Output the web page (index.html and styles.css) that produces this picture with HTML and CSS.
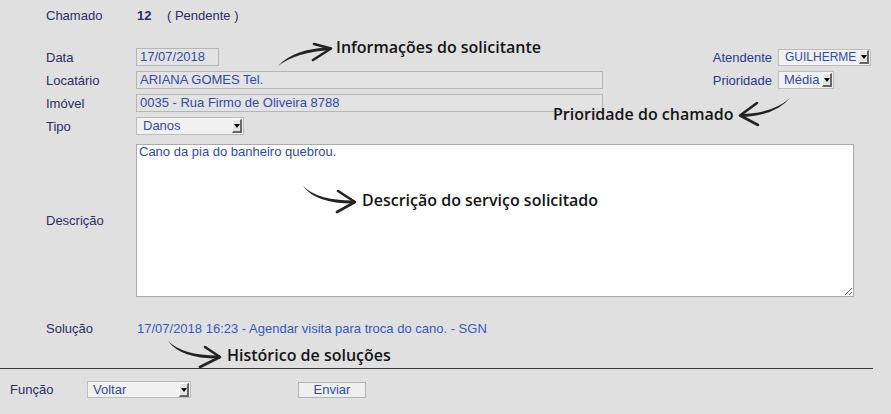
FILE: index.html
```html
<!DOCTYPE html>
<html lang="pt-BR">
<head>
<meta charset="utf-8">
<title>Chamado 12</title>
<link rel="stylesheet" href="styles.css">
</head>
<body>
<div class="page">
  <div class="form">
    <div class="head">
      <span class="lbl">Chamado</span>
      <b class="num">12</b>
      <span class="status">( Pendente )</span>
    </div>
    <div class="top">
      <div class="fields">
        <div class="row"><span class="lbl">Data</span><div class="inp inp-date">17/07/2018</div></div>
        <div class="row"><span class="lbl">Locatário</span><div class="inp inp-wide">ARIANA GOMES Tel.</div></div>
        <div class="row"><span class="lbl">Imóvel</span><div class="inp inp-wide">0035 - Rua Firmo de Oliveira 8788</div></div>
        <div class="row"><span class="lbl">Tipo</span><div class="sel sel-tipo"><span class="sel-txt">Danos</span><span class="arr"></span></div></div>
      </div>
      <div class="side">
        <span class="side-lbl">Atendente</span>
        <div class="sel sel-atend"><span class="sel-txt">GUILHERME</span><span class="arr"></span></div>
        <span class="side-lbl">Prioridade</span>
        <div class="sel sel-prio"><span class="sel-txt">Média</span><span class="arr"></span></div>
      </div>
    </div>
    <div class="row desc">
      <span class="lbl">Descrição</span>
      <textarea class="area" readonly>Cano da pia do banheiro quebrou.</textarea>
    </div>
    <div class="row sol">
      <span class="lbl">Solução</span>
      <span class="sol-txt">17/07/2018 16:23 - Agendar visita para troca do cano. - SGN</span>
    </div>
  </div>
  <div class="rule"></div>
  <div class="footer">
    <span class="f-lbl">Função</span>
    <div class="sel sel-func"><span class="sel-txt">Voltar</span><span class="arr"></span></div>
    <button class="btn" type="button">Enviar</button>
  </div>

  <svg class="arrows" width="891" height="414" viewBox="0 0 891 414" aria-hidden="true">
    <g fill="#222">
      <path d="M278,66 Q293,49 331,47 L331,50 Q296,52 278,66 Z"/>
      <path d="M790,98 Q772,114 740,114 L740,117 Q775,116 790,98 Z"/>
      <path d="M303,186 Q318,201 355,200.5 L355,203.5 Q316,204 303,186 Z"/>
      <path d="M168,341 Q183,356 220,355.5 L220,358.5 Q181,359 168,341 Z"/>
    </g>
    <g fill="none" stroke="#222" stroke-width="2.6" stroke-linecap="round" stroke-linejoin="round">
      <path d="M314,44 L331,48.5 L313,60"/>
      <path d="M757,103 L740,115.5 L758,125"/>
      <path d="M338,191 L355,202 L337,212"/>
      <path d="M205,347 L220,357 L200,367"/>
    </g>
  </svg>
  <div class="note note-info">Informações do solicitante</div>
  <div class="note note-prio">Prioridade do chamado</div>
  <div class="note note-desc">Descrição do serviço solicitado</div>
  <div class="note note-hist">Histórico de soluções</div>
</div>
</body>
</html>
```

FILE: styles.css
```css
html, body {
  margin: 0;
  padding: 0;
  background: #e0e0e0;
}
body {
  font-family: "Liberation Sans", Arial, sans-serif;
  font-size: 13px;
  color: #2a2d66;
}
.page {
  position: relative;
  width: 891px;
  height: 414px;
  overflow: hidden;
}
.form {
  padding: 8px 0 0 46px;
}
.lbl {
  width: 90px;
  flex: none;
  color: #2a2d66;
}
.head {
  display: flex;
  align-items: center;
  height: 16px;
  line-height: 16px;
}
.num {
  font-weight: bold;
  color: #2a2d66;
  width: 30px;
  margin-left: 1px;
}
.status {
  color: #2a2d66;
}
.top {
  display: flex;
  margin-top: 24px;
}
.fields {
  display: flex;
  flex-direction: column;
  gap: 5px;
}
.row {
  display: flex;
  align-items: center;
  height: 18px;
}
.inp {
  height: 18px;
  box-sizing: border-box;
  border: 1px solid #b6b6b6;
  background: #e3e3e3;
  color: #2f4bae;
  padding-left: 3px;
  line-height: 16px;
  white-space: nowrap;
}
.inp-date { width: 83px; }
.inp-wide { width: 467px; }
.sel {
  display: flex;
  align-items: center;
  box-sizing: border-box;
  height: 18px;
  border: 1px solid #bdbdbd;
  background: #f1f1f1;
  color: #2f4bae;
  padding-left: 6px;
}
.sel-txt {
  flex: 1;
  min-width: 0;
  overflow: hidden;
  white-space: nowrap;
  line-height: 16px;
}
.arr {
  position: relative;
  flex: none;
  width: 10px;
  height: 14px;
  box-sizing: border-box;
  margin-right: 1px;
  background: #e4e4e4;
  border-top: 1px solid #fafafa;
  border-left: 1px solid #fafafa;
  border-right: 2px solid #666;
  border-bottom: 2px solid #666;
}
.arr::after {
  content: "";
  position: absolute;
  left: 1px;
  top: 4px;
  border-left: 3px solid transparent;
  border-right: 3px solid transparent;
  border-top: 4px solid #000;
}
.sel-tipo { width: 108px; height: 18px; }
.side {
  margin-left: auto;
  margin-right: 20px;
  display: grid;
  grid-template-columns: auto auto;
  grid-auto-rows: 18px;
  column-gap: 6px;
  row-gap: 5px;
  align-items: center;
  align-self: flex-start;
}
.side-lbl {
  text-align: right;
  color: #2a3a8c;
}
.sel-atend { width: 93px; height: 17px; padding-left: 6px; font-size: 12px; }
.sel-prio { width: 56px; height: 18px; padding-left: 5px; }
.desc {
  height: 154px;
  margin-top: 8px;
}
.area {
  width: 718px;
  height: 153px;
  box-sizing: border-box;
  margin: 0;
  border: 1px solid #ababab;
  background: #fff;
  color: #2f4bae;
  font-family: "Liberation Sans", Arial, sans-serif;
  font-size: 13px;
  line-height: 14px;
  padding: 0 2px;
  resize: both;
  outline: none;
}
.sol {
  margin-top: 23px;
  height: 16px;
}
.sol-txt {
  color: #3559c2;
  margin-left: 1px;
}
.rule {
  width: 873px;
  height: 1px;
  background: #3a3a3a;
  margin-top: 32px;
}
.footer {
  display: flex;
  align-items: center;
  margin-top: 12px;
  padding-left: 10px;
  height: 17px;
}
.f-lbl {
  width: 77px;
  flex: none;
  color: #2a2d66;
}
.sel-func { width: 104px; height: 17px; padding-left: 5px; }
.btn {
  margin: 0 0 0 107px;
  width: 68px;
  height: 16px;
  box-sizing: border-box;
  padding: 0;
  border: 1px solid #b4b4b4;
  background: #efefef;
  color: #2f4bae;
  font-family: "Liberation Sans", Arial, sans-serif;
  font-size: 13px;
  line-height: 14px;
}
.arrows {
  position: absolute;
  left: 0;
  top: 0;
  pointer-events: none;
}
.note {
  position: absolute;
  font-family: "Open Sans", "Noto Sans", sans-serif;
  font-weight: 600;
  font-size: 16px;
  line-height: 20px;
  color: #151515;
  white-space: nowrap;
}
.note-info { left: 336px; top: 37px; }
.note-prio { left: 553px; top: 104px; }
.note-desc { left: 362px; top: 190px; }
.note-hist { left: 227px; top: 345px; }
```
